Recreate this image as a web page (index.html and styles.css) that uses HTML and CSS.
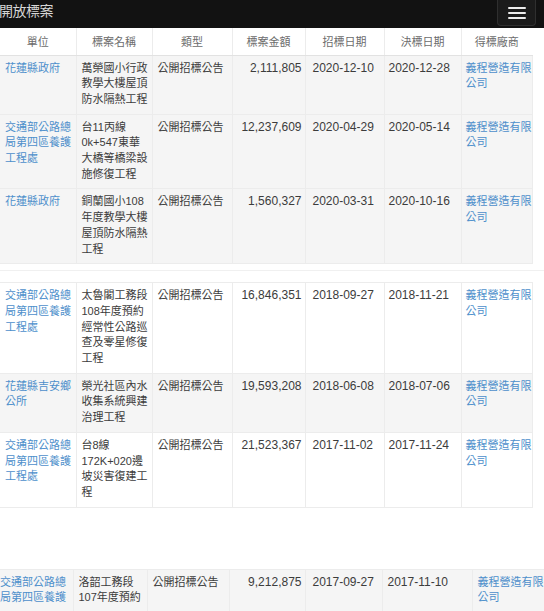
FILE: index.html
```html
<!DOCTYPE html>
<html lang="zh-Hant">
<head>
<meta charset="utf-8">
<title>開放標案</title>
<link rel="stylesheet" href="styles.css">
</head>
<body>
<nav class="navbar">
  <span class="brand">開放標案</span>
  <button class="toggle" aria-label="選單"><span class="bar"></span><span class="bar"></span><span class="bar"></span></button>
</nav>

<table class="grid">
  <colgroup>
    <col class="c-unit"><col class="c-name"><col class="c-type"><col class="c-amt"><col class="c-d1"><col class="c-d2"><col class="c-win">
  </colgroup>
  <thead>
    <tr><th>單位</th><th>標案名稱</th><th>類型</th><th>標案金額</th><th>招標日期</th><th>決標日期</th><th>得標廠商</th></tr>
  </thead>
  <tbody>
    <tr class="shade">
      <td><a href="#">花蓮縣政府</a></td>
      <td>萬榮國小行政教學大樓屋頂防水隔熱工程</td>
      <td>公開招標公告</td>
      <td class="amt">2,111,805</td>
      <td class="date">2020-12-10</td>
      <td class="date d2">2020-12-28</td>
      <td class="win"><a href="#">義程營造有限公司</a></td>
    </tr>
    <tr class="shade">
      <td><a href="#">交通部公路總局第四區養護工程處</a></td>
      <td>台11丙線0k+547東華大橋等橋梁設施修復工程</td>
      <td>公開招標公告</td>
      <td class="amt">12,237,609</td>
      <td class="date">2020-04-29</td>
      <td class="date d2">2020-05-14</td>
      <td class="win"><a href="#">義程營造有限公司</a></td>
    </tr>
    <tr class="shade">
      <td><a href="#">花蓮縣政府</a></td>
      <td>銅蘭國小108年度教學大樓屋頂防水隔熱工程</td>
      <td>公開招標公告</td>
      <td class="amt">1,560,327</td>
      <td class="date">2020-03-31</td>
      <td class="date d2">2020-10-16</td>
      <td class="win"><a href="#">義程營造有限公司</a></td>
    </tr>
  </tbody>
</table>

<div class="seam"></div>

<table class="grid">
  <colgroup>
    <col class="c-unit"><col class="c-name"><col class="c-type"><col class="c-amt"><col class="c-d1"><col class="c-d2"><col class="c-win">
  </colgroup>
  <tbody>
    <tr>
      <td><a href="#">交通部公路總局第四區養護工程處</a></td>
      <td>太魯閣工務段108年度預約經常性公路巡查及零星修復工程</td>
      <td>公開招標公告</td>
      <td class="amt">16,846,351</td>
      <td class="date">2018-09-27</td>
      <td class="date d2">2018-11-21</td>
      <td class="win"><a href="#">義程營造有限公司</a></td>
    </tr>
    <tr class="shade">
      <td><a href="#">花蓮縣吉安鄉公所</a></td>
      <td>榮光社區內水收集系統興建治理工程</td>
      <td>公開招標公告</td>
      <td class="amt">19,593,208</td>
      <td class="date">2018-06-08</td>
      <td class="date d2">2018-07-06</td>
      <td class="win"><a href="#">義程營造有限公司</a></td>
    </tr>
    <tr>
      <td><a href="#">交通部公路總局第四區養護工程處</a></td>
      <td>台8線172K+020邊坡災害復建工程</td>
      <td>公開招標公告</td>
      <td class="amt">21,523,367</td>
      <td class="date">2017-11-02</td>
      <td class="date d2">2017-11-24</td>
      <td class="win"><a href="#">義程營造有限公司</a></td>
    </tr>
  </tbody>
</table>

<div class="blank"></div>

<table class="grid wide">
  <colgroup>
    <col class="c-unit"><col class="c-name"><col class="c-type"><col class="c-amt"><col class="c-d1"><col class="c-d2"><col class="c-win">
  </colgroup>
  <tbody>
    <tr class="shade">
      <td><div class="peek"><a href="#">交通部公路總局第四區養護工程處</a></div></td>
      <td><div class="peek">洛韶工務段107年度預約經常性公路巡查及零星修復工程</div></td>
      <td>公開招標公告</td>
      <td class="amt">9,212,875</td>
      <td class="date">2017-09-27</td>
      <td class="date d2">2017-11-10</td>
      <td class="win"><a href="#">義程營造有限公司</a></td>
    </tr>
  </tbody>
</table>
</body>
</html>
```

FILE: styles.css
```css
* { box-sizing: border-box; }

html, body {
  margin: 0;
  padding: 0;
  background: #fff;
}

body {
  width: 544px;
  height: 611px;
  overflow: hidden;
  font-family: "Liberation Sans", "Noto Sans CJK TC", sans-serif;
  color: #3c3c3c;
}

/* ---------- navbar ---------- */
.navbar {
  height: 28px;
  background: #121212;
  display: flex;
  justify-content: space-between;
  align-items: flex-start;
}

.brand {
  font-family: "Noto Sans CJK TC", sans-serif;
  font-size: 14px;
  line-height: 20px;
  color: #d6d6d6;
  margin-left: -1px;
  letter-spacing: -0.5px;
}

.toggle {
  width: 39px;
  height: 26px;
  margin-right: 8px;
  padding: 0;
  background: #1b1b1b;
  border: 1px solid #2f2f2f;
  border-top: none;
  border-radius: 0 0 4px 4px;
  display: flex;
  flex-direction: column;
  align-items: center;
  justify-content: center;
  gap: 3px;
}

.bar {
  display: block;
  width: 18px;
  height: 2px;
  border-radius: 1px;
  background: #ececec;
}

/* ---------- table ---------- */
.grid {
  border-collapse: collapse;
  table-layout: fixed;
  width: 532px;
}

.grid .c-unit { width: 76px; }
.grid .c-name { width: 76px; }
.grid .c-type { width: 80px; }
.grid .c-amt  { width: 73px; }
.grid .c-d1   { width: 79px; }
.grid .c-d2   { width: 77px; }
.grid .c-win  { width: 71px; }

.grid th {
  height: 27px;
  padding: 0;
  font-family: "Noto Sans CJK TC", sans-serif;
  font-size: 11px;
  font-weight: normal;
  color: #6c6c6c;
  text-align: center;
  background: #fff;
  border-left: 1px solid #ececec;
  border-bottom: 1px solid #e2e2e2;
}

.grid th:first-child,
.grid td:first-child {
  border-left: none;
}

.grid td {
  padding: 5px 4px 6px 5px;
  vertical-align: top;
  font-size: 11px;
  line-height: 15.7px;
  border: 1px solid #ececec;
}

.grid tr.shade td {
  background: #f5f5f5;
}

.grid td.amt {
  font-size: 12px;
  text-align: right;
  padding-right: 3px;
}

.grid td.date {
  font-size: 12px;
  padding-left: 7px;
}

.grid td.d2 {
  padding-left: 4px;
}

.grid td.win {
  padding-left: 4px;
  padding-right: 0;
}

.grid a {
  color: #4d8fcb;
  text-decoration: none;
}

/* stitched gap between page segments */
.seam {
  height: 18px;
  padding-top: 6px;
}

.seam::before {
  content: "";
  display: block;
  height: 1px;
  background: #f0f0f0;
}

.blank {
  height: 61px;
}

/* last segment captured at a wider offset; only its first two lines are in frame */
.grid.wide {
  width: 552px;
  margin-left: -5px;
}

.grid.wide .c-unit { width: 78px; }
.grid.wide .c-name { width: 74px; }
.grid.wide .c-type { width: 82px; }
.grid.wide .c-amt  { width: 76px; }
.grid.wide .c-d1   { width: 77px; }
.grid.wide .c-d2   { width: 90px; }
.grid.wide .c-win  { width: 75px; }

.grid.wide td.date { padding-left: 7px; }
.grid.wide td.d2 { padding-left: 5px; }
.grid.wide td.win { padding-left: 5px; }

.peek {
  max-height: 31.4px;
  overflow: hidden;
}
```
